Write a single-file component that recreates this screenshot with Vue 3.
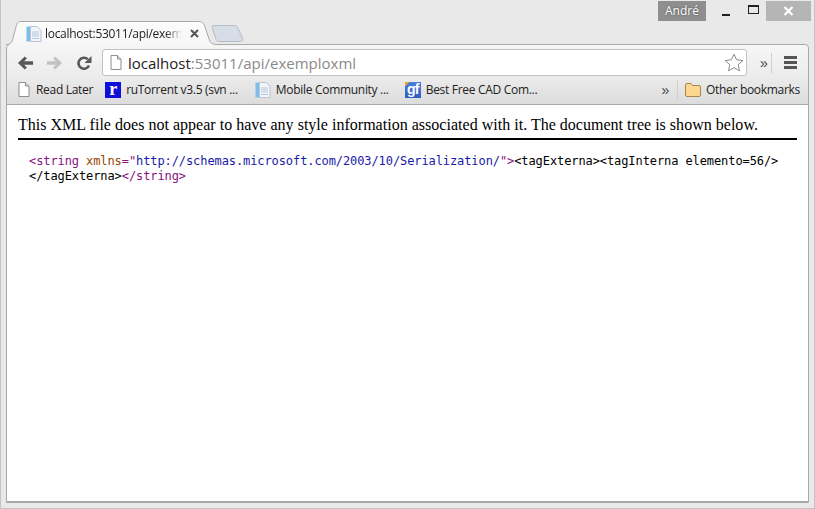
<script setup>
const bookmarks = [
  { id: 'doc', label: 'Read Later', gap: 12 },
  { id: 'ru', label: 'ruTorrent v3.5 (svn ...', gap: 17 },
  { id: 'page', label: 'Mobile Community ...', gap: 16 },
  { id: 'gf', label: 'Best Free CAD Com...', gap: 0 },
]
</script>

<template>
  <div class="window">
    <header class="titlebar">
      <span class="user">André</span>
      <button class="ctl min" aria-label="Minimize"><i></i></button>
      <button class="ctl max" aria-label="Maximize"><i></i></button>
      <button class="ctl close" aria-label="Close">
        <svg width="11" height="10" viewBox="0 0 11 10"><path d="M1.5 1 9.5 9M9.5 1 1.5 9" stroke="#fff" stroke-width="2.2" fill="none"/></svg>
      </button>
    </header>

    <div class="tabstrip">
      <div class="tab">
        <svg class="tab-shape" width="212" height="24" viewBox="0 0 212 24">
          <defs>
            <linearGradient id="tabfill" x1="0" y1="0" x2="0" y2="1">
              <stop offset="0" stop-color="#fcfcfc"/>
              <stop offset="1" stop-color="#f6f6f6"/>
            </linearGradient>
          </defs>
          <path d="M0 24C5 24 6 21 7 17L10 6C11 2 12 .5 15 .5H192C196 .5 198 2 199 6L203 18C204 21 205 23 210 23.500V24Z" fill="url(#tabfill)"/>
          <path d="M0 23.500C5 23.500 6 21 7 17L10 6C11 2 12 .5 15 .5H192C196 .5 198 2 199 6L203 18C204 21 205 23 210 23.500" fill="none" stroke="#a9a9a9"/>
        </svg>
        <svg class="favicon" width="16" height="16" viewBox="0 0 16 16">
          <rect x="0.500" y="0.500" width="4" height="15" fill="#7cc0ea"/>
          <path d="M4.500.5H11L15 4.500V15.500H4.500Z" fill="#f3f5f8" stroke="#b9c3d2"/>
          <path d="M6 6H13M6 8H13M6 10H13M6 12.500H13" stroke="#b4c8df"/>
        </svg>
        <span class="tab-title">localhost:53011/api/exem</span>
        <svg class="tab-x" width="9" height="9" viewBox="0 0 9 9"><path d="M1 1 8 8M8 1 1 8" stroke="#555" stroke-width="2" fill="none"/></svg>
      </div>
      <svg class="newtab" width="33" height="17" viewBox="0 0 33 17">
        <path d="M1 1.500C1 .8 1.500 .5 2.500 .5H23C25 .5 26 1.200 26.800 3L31.500 13C32.300 15 31.500 16.500 29.500 16.500H8C6.500 16.500 5.500 16 5 14.500L1.500 3.500C1.200 2.700 1 2.200 1 1.500Z" fill="#d6dde6" stroke="#b7bcc4"/>
      </svg>
    </div>

    <div class="panel">
      <div class="toolbar">
        <button class="nav" aria-label="Back">
          <svg width="17" height="16" viewBox="0 0 18 16"><path d="M17 6.200H7.500L10.500 3.200 8.300 1 1 8l7.300 7 2.200-2.200-3-3H17Z" fill="#585858"/></svg>
        </button>
        <button class="nav" aria-label="Forward">
          <svg width="17" height="16" viewBox="0 0 18 16"><path d="M1 6.200H10.500L7.500 3.200 9.700 1 17 8l-7.300 7-2.200-2.200 3-3H1Z" fill="#c2c2c2"/></svg>
        </button>
        <button class="nav" aria-label="Reload">
          <svg width="16" height="16" viewBox="0 0 16 16"><path d="M13 10.500A5.500 5.500 0 1 1 11.800 4.300" fill="none" stroke="#585858" stroke-width="2.600"/><path d="M15.500 1V8H8.500Z" fill="#585858"/></svg>
        </button>
        <div class="omnibox">
          <svg class="omni-doc" width="12" height="15" viewBox="0 0 12 15"><path d="M1 .5H7.500L11 4V14.500H1Z" fill="#fff" stroke="#8e8e8e"/><path d="M7.500.5V4H11" fill="#ddd" stroke="#8e8e8e"/></svg>
          <span class="url"><b>localhost</b>:53011/api/exemploxml</span>
          <svg class="star" width="20" height="19" viewBox="0 0 20 19"><path d="M10 1.200 12.600 6.800 18.800 7.500 14.200 11.700 15.500 17.800 10 14.700 4.500 17.800 5.800 11.700 1.200 7.500 7.400 6.800Z" fill="#fff" stroke="#8a8a8a"/></svg>
        </div>
        <span class="chev tool-chev">»</span>
        <i class="sep tool-sep"></i>
        <button class="menu" aria-label="Menu"><i></i><i></i><i></i></button>
      </div>

      <div class="bookmarks">
        <a v-for="b in bookmarks" :key="b.id" class="bm" :style="{ marginRight: b.gap + 'px' }">
          <svg v-if="b.id === 'doc'" class="bm-doc" width="12" height="15" viewBox="0 0 12 15"><path d="M1 .5H7.500L11 4V14.500H1Z" fill="#fff" stroke="#8e8e8e"/><path d="M7.500.5V4H11" fill="#ddd" stroke="#8e8e8e"/></svg>
          <span v-else-if="b.id === 'ru'" class="ico ru">r</span>
          <svg v-else-if="b.id === 'page'" class="ico" width="16" height="16" viewBox="0 0 16 16">
            <rect x="0.500" y="0.500" width="4" height="15" fill="#7cc0ea"/>
            <path d="M4.500.5H11L15 4.500V15.500H4.500Z" fill="#f3f5f8" stroke="#b9c3d2"/>
            <path d="M6 6H13M6 8H13M6 10H13M6 12.500H13" stroke="#b4c8df"/>
          </svg>
          <span v-else class="ico gf">gf</span>
          <span class="bm-label">{{ b.label }}</span>
        </a>
        <span class="chev bm-chev">»</span>
        <i class="sep bm-sep"></i>
        <a class="bm other">
          <svg width="16" height="14" viewBox="0 0 16 14"><path d="M.5 2A1.500 1.500 0 0 1 2 .5H6L7.500 2.500H14A1.500 1.500 0 0 1 15.500 4V12A1.500 1.500 0 0 1 14 13.500H2A1.500 1.500 0 0 1 .5 12Z" fill="#fbd78f" stroke="#a8854c"/></svg>
          <span class="bm-label">Other bookmarks</span>
        </a>
      </div>

      <main class="page">
        <p class="notice">This XML file does not appear to have any style information associated with it. The document tree is shown below.</p>
        <hr class="rule" />
        <div class="xml"><span class="t">&lt;string </span><span class="a">xmlns</span><span class="t">="</span><span class="v">http://schemas.microsoft.com/2003/10/Serialization/</span><span class="t">"&gt;</span>&lt;tagExterna&gt;&lt;tagInterna elemento=56/&gt;<br />&lt;/tagExterna&gt;<span class="t">&lt;/string&gt;</span></div>
      </main>
    </div>
  </div>
</template>

<style>
html, body { margin: 0; padding: 0; background: #e8e8e8; }
</style>

<style scoped>
.window {
  box-sizing: border-box;
  width: 815px;
  height: 509px;
  padding: 0 5px 5px;
  display: flex;
  flex-direction: column;
  background: #e9e9e9;
  border: 1px solid #c4c4c4;
  border-top: 0;
  font-family: "Open Sans", "Noto Sans", sans-serif;
  overflow: hidden;
}
button { border: 0; background: none; padding: 0; }
i { display: block; }

.titlebar {
  height: 21px;
  flex: none;
  padding-top: 1px;
  box-sizing: border-box;
  display: flex;
  justify-content: flex-end;
  margin-right: -2px;
}
.user {
  width: 48px;
  height: 20px;
  background: #8f8f8f;
  color: #fff;
  font-size: 12px;
  line-height: 20px;
  text-align: center;
  text-shadow: 0 0 2px #444;
}
.ctl { width: 30px; height: 20px; display: flex; align-items: center; justify-content: center; }
.min { margin-left: 5px; }
.min i { width: 8px; height: 2px; background: #222; margin-top: 8px; }
.max { width: 25px; }
.max i { box-sizing: border-box; width: 11px; height: 9px; border: 1px solid #222; border-top-width: 2px; margin-top: -3px; }
.close { width: 45px; background: #b5b5b5; }

.tabstrip {
  height: 23px;
  flex: none;
  display: flex;
  align-items: flex-start;
  position: relative;
  z-index: 1;
}
.tab {
  position: relative;
  width: 206px;
  height: 24px;
  flex: none;
  display: flex;
  align-items: center;
  box-sizing: border-box;
  padding-left: 20px;
}
.tab-shape { position: absolute; left: 0; top: 0; }
.favicon { position: relative; flex: none; margin-top: 1px; }
.tab-title {
  position: relative;
  width: 137px;
  margin-left: 3px;
  white-space: nowrap;
  overflow: hidden;
  font-size: 12px;
  letter-spacing: -0.3px;
  color: #222;
  -webkit-mask-image: linear-gradient(to right, #000 88%, transparent);
  mask-image: linear-gradient(to right, #000 88%, transparent);
}
.tab-x { position: relative; margin-left: 8px; }
.newtab { flex: none; margin-top: 4px; margin-left: -1px; }

.panel {
  flex: 1;
  min-height: 0;
  display: flex;
  flex-direction: column;
  border: 1px solid #a9a9a9;
  border-radius: 4px 4px 0 0;
}
.toolbar {
  height: 31px;
  flex: none;
  box-sizing: border-box;
  display: flex;
  align-items: center;
  padding: 4px 0 0 4px;
  background: linear-gradient(#f6f6f6, #ececec);
  border-radius: 4px 4px 0 0;
}
.nav { width: 29px; height: 20px; display: flex; align-items: center; justify-content: center; }
.omnibox {
  box-sizing: border-box;
  width: 645px;
  height: 27px;
  margin-left: 4px;
  display: flex;
  align-items: center;
  padding: 0 6px 0 7px;
  background: #fff;
  border: 1px solid #c2c2c2;
  border-radius: 3px;
}
.omni-doc { flex: none; }
.url {
  flex: 1;
  margin-left: 6px;
  font-size: 15px;
  color: #8a8a8a;
  white-space: nowrap;
}
.url b { font-weight: 400; color: #222; }
.star { flex: none; margin-right: -4px; }
.chev { font-family: "Liberation Sans", sans-serif; color: #444; font-size: 14px; }
.tool-chev { margin-left: 13px; }
.sep { width: 1px; height: 20px; background: #cfcfcf; }
.tool-sep { margin-left: 3px; }
.menu { display: flex; flex-direction: column; gap: 2px; margin-left: 12px; }
.menu i { width: 13px; height: 3px; background: #555; }

.bookmarks {
  height: 29px;
  flex: none;
  box-sizing: border-box;
  display: flex;
  align-items: center;
  padding: 0 0 1px 11px;
  background: linear-gradient(#ececec, #dcdcdc);
  border-bottom: 1px solid #a9a9a9;
  font-size: 12px;
  letter-spacing: -0.3px;
  color: #222;
}
.bm { display: flex; align-items: center; white-space: nowrap; }
.bm-doc { margin-right: 6px; }
.ico { flex: none; width: 16px; height: 16px; margin-right: 5px; }
.ru {
  background: #0f0fdc;
  color: #fff;
  font: 700 18px/15px "Liberation Serif", serif;
  text-align: center;
  letter-spacing: 0;
}
.gf {
  background: linear-gradient(135deg, #f0a22e 3px, transparent 3px), linear-gradient(#4a7fdc, #2f5cc0);
  color: #fff;
  font: 700 14px/15px "Liberation Sans", sans-serif;
  text-align: center;
  letter-spacing: -1px;
}
.bm-chev { margin-left: auto; }
.bm-sep { margin: 0 7px 0 8px; }
.other { margin-right: 8px; }
.other svg { margin-right: 5px; }

.page {
  flex: 1;
  min-height: 0;
  background: #fff;
  box-sizing: border-box;
  padding: 11px 11px 0;
  border-bottom: 1px solid #a9a9a9;
  color: #000;
}
.notice {
  margin: 0;
  font: 16px/18px "Liberation Serif", serif;
  letter-spacing: 0.018px;
  white-space: nowrap;
}
.rule { height: 2px; margin: 4px 0 0; border: 0; background: #000; }
.xml {
  margin: 14px 0 0 11px;
  font: 12px/15px "DejaVu Sans Mono", monospace;
  letter-spacing: -0.09px;
  color: #000;
  white-space: nowrap;
}
.t { color: #881280; }
.a { color: #994500; }
.v { color: #1a1aa6; }
</style>
